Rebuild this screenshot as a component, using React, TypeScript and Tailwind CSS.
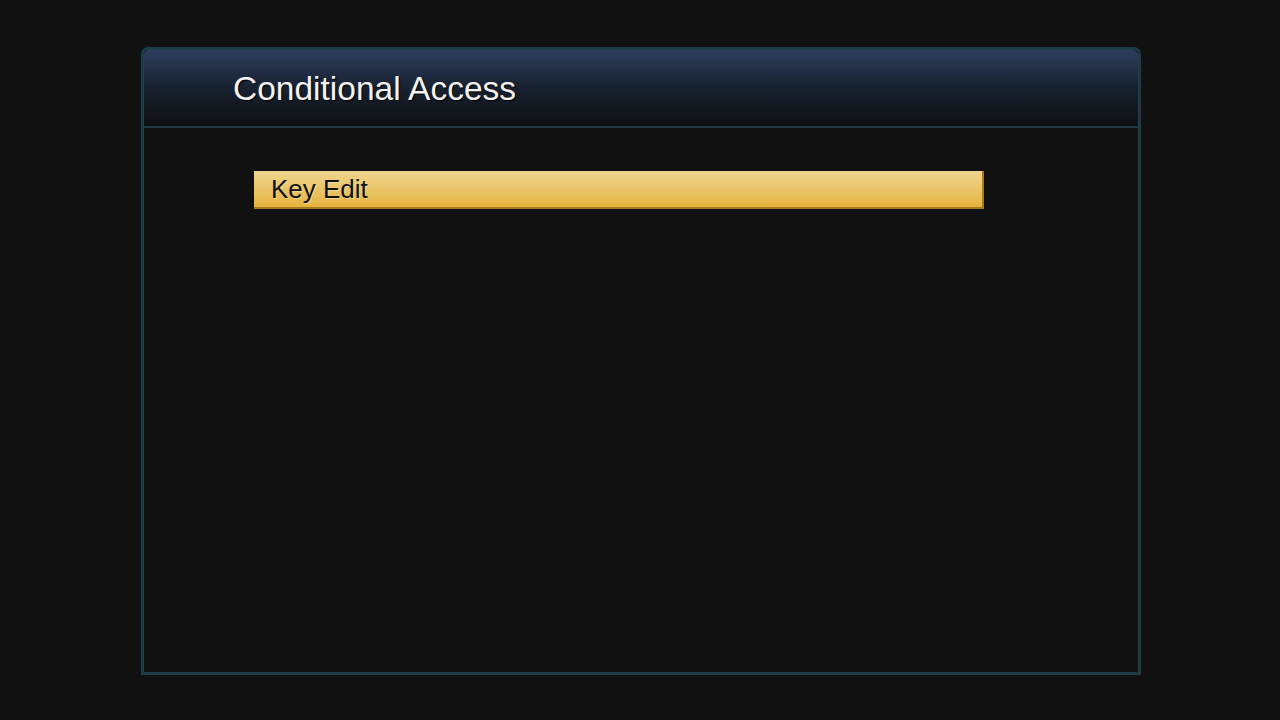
export default function App() {
  return (
    <div
      className="flex h-[720px] w-[1280px] bg-[#111111] pl-[141px] pt-[47px]"
      style={{ fontFamily: '"Liberation Sans", Arial, sans-serif' }}
    >
      <div className="flex h-[628px] w-[1000px] flex-col rounded-t-[7px] border-[3px] border-[#1d3c47] bg-[#111111]">
        {/* header */}
        <div className="flex h-[78px] items-center rounded-t-[5px] border-b-2 border-[#1d3c47] bg-gradient-to-b from-[#2c3d5f] via-[#18212f] to-[#0f1012] pl-[89px]">
          <span className="pt-[2px] text-[33.5px] leading-none text-[#f2f2f2] [text-shadow:1px_1px_1px_#000]">
            Conditional Access
          </span>
        </div>

        {/* menu */}
        <div className="flex flex-col pl-[110px] pt-[43px]">
          <div className="flex h-[38px] w-[730px] items-center border-r-2 border-b-2 border-[#a87a1e] bg-gradient-to-b from-[#efd58d] to-[#e5b43c] pl-[17px]">
            <span className="text-[26px] leading-none text-[#111111] [text-shadow:1px_1px_0_rgba(255,240,200,0.5)]">
              Key Edit
            </span>
          </div>
        </div>
      </div>
    </div>
  );
}
